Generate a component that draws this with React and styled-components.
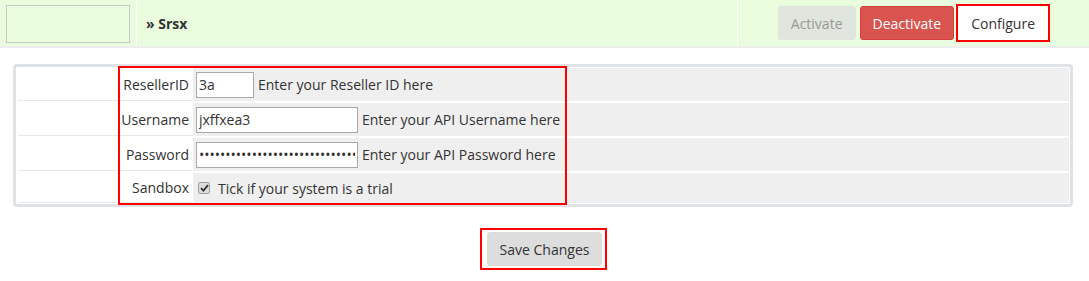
import React from 'react'
import styled, { createGlobalStyle } from 'styled-components'

const Global = createGlobalStyle`
  body {
    margin: 0;
    background: #fff;
    font-family: "Open Sans", "Liberation Sans", sans-serif;
    font-size: 14px;
    color: #333;
  }
`

const Header = styled.div`
  display: flex;
  height: 46px;
  background: #e9fcdd;
  border-bottom: 2px solid #ededed;
`

const LogoCell = styled.div`
  width: 137px;
  padding: 5px 6px 3px 6px;
  box-sizing: border-box;
  border-right: 1px solid #fff;
`

const LogoBox = styled.div`
  height: 100%;
  border: 1px solid #c8c8c8;
  box-sizing: border-box;
`

const NameCell = styled.div`
  flex: 1;
  display: flex;
  align-items: center;
  padding-left: 9px;
  font-weight: 700;
  border-right: 1px solid #fff;
`

const ActionCell = styled.div`
  width: 351px;
  display: flex;
  align-items: center;
  justify-content: flex-end;
  gap: 4px;
  padding-right: 41px;
  box-sizing: border-box;
`

const Button = styled.button`
  font-family: inherit;
  font-size: 14px;
  height: 34px;
  padding: 0 12px;
  border-radius: 3px;
  border: 1px solid ${p => p.$border};
  background: ${p => p.$bg};
  color: ${p => p.$color};
  cursor: pointer;
  box-sizing: border-box;
  display: block;
`

const Mark = styled.div`
  position: relative;
  display: flex;
  &::after {
    content: '';
    position: absolute;
    inset: ${p => p.$inset || '-2px'};
    border: 2px solid #f00;
    pointer-events: none;
  }
`

const Panel = styled.div`
  position: relative;
  margin: 16px 16px 0 13px;
  border: 3px solid #dfe3e6;
  border-radius: 4px;
  padding: 1px 1px 1px 2px;
  display: flex;
  flex-direction: column;
  gap: 2px;
`

const Row = styled.div`
  display: grid;
  grid-template-columns: 175px 1fr;
  height: ${p => p.$h || 33}px;
`

const Label = styled.div`
  display: flex;
  align-items: center;
  justify-content: flex-end;
  padding-right: 4px;
  border-bottom: 1px solid #e8e8e8;
  background: #fff;
`

const Field = styled.div`
  display: flex;
  align-items: center;
  gap: 4px;
  padding-left: 3px;
  background: #efefef;
`

const Input = styled.input`
  font-family: inherit;
  font-size: 14px;
  color: #333;
  height: 26px;
  width: ${p => p.$w}px;
  box-sizing: border-box;
  border: 1px solid #a9a9a9;
  padding: 0 2px;
  background: #fff;
  outline: none;
`

const Check = styled.span`
  display: inline-flex;
  align-items: center;
  justify-content: center;
  width: 12px;
  height: 12px;
  margin: 0 4px 0 2px;
  box-sizing: border-box;
  border: 1px solid #a0a0a0;
  border-radius: 2px;
  background: #dcdcdc;
`

const Overlay = styled.div`
  position: absolute;
  left: 102px;
  top: -1px;
  width: 449px;
  height: 139px;
  border: 2px solid #f00;
  box-sizing: border-box;
  pointer-events: none;
`

const Footer = styled.div`
  display: flex;
  justify-content: center;
  padding: 25px 0 16px;
`

export default function App() {
  return (
    <>
      <Global />
      <Header>
        <LogoCell><LogoBox /></LogoCell>
        <NameCell>» Srsx</NameCell>
        <ActionCell>
          <Button $bg="#e0e5dd" $border="#e0e5dd" $color="#999">Activate</Button>
          <Button $bg="#d9534f" $border="#d43f3a" $color="#fff">Deactivate</Button>
          <Mark $inset="-2px">
            <Button $bg="#fff" $border="#fff" $color="#333">Configure</Button>
          </Mark>
        </ActionCell>
      </Header>

      <Panel>
        <Row>
          <Label>ResellerID</Label>
          <Field><Input $w={58} defaultValue="3a" />Enter your Reseller ID here</Field>
        </Row>
        <Row>
          <Label>Username</Label>
          <Field><Input $w={162} defaultValue="jxffxea3" />Enter your API Username here</Field>
        </Row>
        <Row>
          <Label>Password</Label>
          <Field><Input $w={162} type="password" defaultValue="abcdefghijklmnopqrstuvwxyz1234" />Enter your API Password here</Field>
        </Row>
        <Row $h={30}>
          <Label>Sandbox</Label>
          <Field>
            <Check role="checkbox" aria-checked="true">
              <svg width="9" height="8" viewBox="0 0 9 8">
                <path d="M1 4.2 L3.4 6.6 L8 1.2" fill="none" stroke="#333" strokeWidth="1.8" />
              </svg>
            </Check>
            Tick if your system is a trial
          </Field>
        </Row>
        <Overlay />
      </Panel>

      <Footer>
        <Mark $inset="-4px -5px -4px -7px">
          <Button $bg="#ddd" $border="#ddd" $color="#333">Save Changes</Button>
        </Mark>
      </Footer>
    </>
  )
}
